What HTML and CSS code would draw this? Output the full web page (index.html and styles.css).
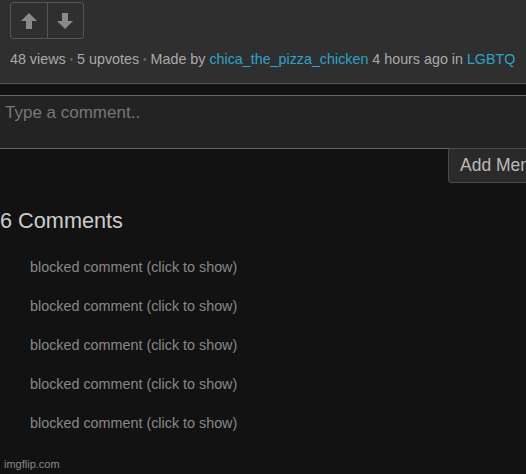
FILE: index.html
```html
<!DOCTYPE html>
<html>
<head>
<meta charset="utf-8">
<link rel="stylesheet" href="styles.css">
</head>
<body>
<div class="page">
  <section class="post">
    <div class="votes">
      <button class="vote">
        <svg width="18" height="18" viewBox="0 0 18 18"><path d="M9 1 L17 9 L12 9 L12 17 L6 17 L6 9 L1 9 Z" fill="#8a8a8a"/></svg>
      </button>
      <button class="vote">
        <svg width="18" height="18" viewBox="0 0 18 18"><path d="M9 17 L17 9 L12 9 L12 1 L6 1 L6 9 L1 9 Z" fill="#8a8a8a"/></svg>
      </button>
    </div>
    <div class="meta">48 views <span class="dot">•</span> 5 upvotes <span class="dot">•</span> Made by <a class="link">chica_the_pizza_chicken</a> 4 hours ago in <a class="link">LGBTQ</a></div>
  </section>
  <div class="compose">
    <div class="input">Type a comment..</div>
    <div class="actions"><button class="add">Add Meme</button></div>
  </div>
  <h2 class="count">6 Comments</h2>
  <ul class="comments">
    <li>blocked comment (click to show)</li>
    <li>blocked comment (click to show)</li>
    <li>blocked comment (click to show)</li>
    <li>blocked comment (click to show)</li>
    <li>blocked comment (click to show)</li>
  </ul>
  <div class="watermark">imgflip.com</div>
</div>
</body>
</html>
```

FILE: styles.css
```css
html, body {
  margin: 0;
  padding: 0;
  background: #121212;
  font-family: "Liberation Sans", Arial, sans-serif;
  overflow: hidden;
}
.page {
  width: 526px;
  height: 474px;
  position: relative;
  overflow: hidden;
}
.post {
  background: #2f2f2f;
  border-bottom: 1px solid #555;
  height: 84px;
  box-sizing: border-box;
  padding: 2px 0 0 10px;
}
.votes {
  display: flex;
  width: 74px;
  height: 37px;
  border: 1px solid #555;
  border-radius: 3px;
  box-sizing: border-box;
}
.vote {
  flex: 1;
  background: transparent;
  border: none;
  padding: 0;
  display: flex;
  align-items: center;
  justify-content: center;
}
.vote + .vote {
  border-left: 1px solid #555;
}
.meta {
  margin-top: 12px;
  font-size: 14.3px;
  color: #aaa;
  white-space: nowrap;
}
.dot {
  color: #666;
  font-size: 10px;
  vertical-align: 1px;
}
.link {
  color: #2aa4c9;
}
.compose {
  padding-top: 11px;
}
.input {
  margin-left: -2px;
  width: 540px;
  height: 54px;
  box-sizing: border-box;
  background: #232323;
  border-top: 1px solid #666;
  border-bottom: 1px solid #666;
  padding: 7px 0 0 7px;
  font-size: 17px;
  color: #777;
}
.actions {
  display: flex;
  margin-top: -1px;
  padding-left: 448px;
  overflow: hidden;
}
.add {
  flex: none;
  background: #2a2a2a;
  border: 1px solid #4a4a4a;
  border-radius: 3px;
  height: 35px;
  padding: 0 11px;
  font-family: "Liberation Sans", Arial, sans-serif;
  font-size: 17.5px;
  color: #bbb;
  white-space: nowrap;
}
.count {
  margin: 25px 0 0 0;
  font-size: 21.7px;
  font-weight: normal;
  color: #ccc;
}
.comments {
  list-style: none;
  margin: 25px 0 0 0;
  padding: 0 0 0 30px;
}
.comments li {
  font-size: 14.35px;
  color: #888;
  height: 39px;
}
.watermark {
  position: absolute;
  left: 4px;
  top: 458px;
  font-size: 11px;
  color: #888;
}
```
